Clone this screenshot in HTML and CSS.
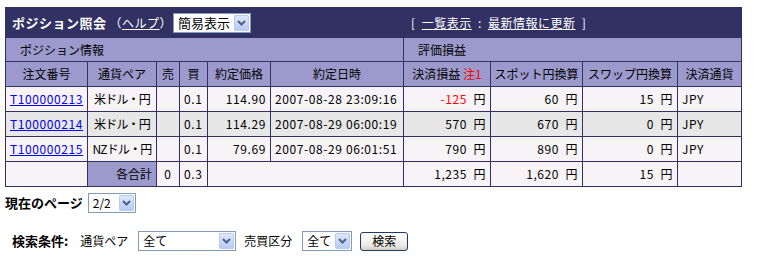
FILE: index.html
```html
<!DOCTYPE html>
<html lang="ja">
<head>
<meta charset="utf-8">
<title>ポジション照会</title>
<link rel="stylesheet" href="styles.css">
</head>
<body>
<table class="pos">
  <colgroup>
    <col class="c1"><col class="c2"><col class="c3"><col class="c4"><col class="c5">
    <col class="c6"><col class="c7"><col class="c8"><col class="c9"><col class="c10">
  </colgroup>
  <tr class="title-row">
    <td colspan="10">
      <div class="title-bar">
        <div class="title-left">
          <span class="title">ポジション照会</span>
          <span class="help">（<a href="#">ヘルプ</a>）</span>
          <span class="sel sel-mode"><span class="sel-text">簡易表示</span><span class="sel-btn"><svg width="9" height="6" viewBox="0 0 9 6"><path d="M1 1 L4.5 4.5 L8 1" fill="none" stroke="#4d6185" stroke-width="2"/></svg></span></span>
        </div>
        <div class="title-right">[ <a href="#">一覧表示</a> : <a href="#">最新情報に更新</a> ]</div>
      </div>
    </td>
  </tr>
  <tr class="section-row">
    <td colspan="6">ポジション情報</td>
    <td colspan="4">評価損益</td>
  </tr>
  <tr class="head-row">
    <th>注文番号</th><th>通貨ペア</th><th>売</th><th>買</th><th>約定価格</th>
    <th>約定日時</th><th>決済損益 <span class="red">注1</span></th><th>スポット円換算</th><th>スワップ円換算</th><th>決済通貨</th>
  </tr>
  <tr class="data">
    <td class="l"><a href="#">T100000213</a></td><td class="pair">米ドル・円</td><td></td><td class="l">0.1</td><td class="r">114.90</td>
    <td class="l">2007-08-28 23:09:16</td><td class="r"><span class="red">-125</span> 円</td><td class="r">60 円</td><td class="r">15 円</td><td class="l">JPY</td>
  </tr>
  <tr class="data alt">
    <td class="l"><a href="#">T100000214</a></td><td class="pair">米ドル・円</td><td></td><td class="l">0.1</td><td class="r">114.29</td>
    <td class="l">2007-08-29 06:00:19</td><td class="r">570 円</td><td class="r">670 円</td><td class="r">0 円</td><td class="l">JPY</td>
  </tr>
  <tr class="data">
    <td class="l"><a href="#">T100000215</a></td><td class="pair">NZドル・円</td><td></td><td class="l">0.1</td><td class="r">79.69</td>
    <td class="l">2007-08-29 06:01:51</td><td class="r">790 円</td><td class="r">890 円</td><td class="r">0 円</td><td class="l">JPY</td>
  </tr>
  <tr class="data total">
    <td></td><td class="r sum">各合計</td><td class="c">0</td><td class="l">0.3</td><td colspan="2"></td>
    <td class="r">1,235 円</td><td class="r">1,620 円</td><td class="r">15 円</td><td></td>
  </tr>
</table>

<div class="page-row">
  <span class="label">現在のページ</span>
  <span class="sel sel-page"><span class="sel-text">2/2</span><span class="sel-btn"><svg width="9" height="6" viewBox="0 0 9 6"><path d="M1 1 L4.5 4.5 L8 1" fill="none" stroke="#4d6185" stroke-width="2"/></svg></span></span>
</div>

<div class="search-row">
  <span class="label">検索条件:</span>
  <span class="txt txt-pair">通貨ペア</span>
  <span class="sel sel-pair"><span class="sel-text">全て</span><span class="sel-btn"><svg width="9" height="6" viewBox="0 0 9 6"><path d="M1 1 L4.5 4.5 L8 1" fill="none" stroke="#4d6185" stroke-width="2"/></svg></span></span>
  <span class="txt txt-side">売買区分</span>
  <span class="sel sel-side"><span class="sel-text">全て</span><span class="sel-btn"><svg width="9" height="6" viewBox="0 0 9 6"><path d="M1 1 L4.5 4.5 L8 1" fill="none" stroke="#4d6185" stroke-width="2"/></svg></span></span>
  <button class="btn" type="button">検索</button>
</div>
</body>
</html>
```

FILE: styles.css
```css
body {
  margin: 0;
  padding: 7px 5px 0 5px;
  background: #fff;
  color: #000;
  font-family: "Noto Sans CJK JP", "Liberation Sans", sans-serif;
  font-size: 12px;
  line-height: 14px;
}

a { color: #0000ee; }

.pos {
  border-collapse: collapse;
  table-layout: fixed;
  width: 737px;
}
.c1 { width: 82px; }
.c2 { width: 69px; }
.c3 { width: 23px; }
.c4 { width: 28px; }
.c5 { width: 63px; }
.c6 { width: 133px; }
.c7 { width: 87px; }
.c8 { width: 92px; }
.c9 { width: 95px; }
.c10 { width: 64px; }

.pos td, .pos th {
  border: 1px solid #313163;
  padding: 0 4px;
  white-space: nowrap;
  overflow: hidden;
}

.title-row td {
  background: #313163;
  height: 30px;
  padding: 0;
  border-bottom: none;
}
.title-bar {
  display: flex;
  align-items: center;
  color: #fff;
}
.title-left {
  width: 398px;
  display: flex;
  align-items: center;
  padding-left: 6px;
  box-sizing: border-box;
}
.title {
  font-weight: bold;
  font-size: 13px;
  letter-spacing: 0.5px;
}
.help {
  margin-left: 3px;
  font-size: 12px;
  letter-spacing: 0.5px;
}
.help a, .title-right a { color: #fff; }
.title-right {
  padding-left: 7px;
  font-size: 12px;
  word-spacing: 3px;
  letter-spacing: 0.5px;
}

.sel {
  display: inline-flex;
  align-items: center;
  box-sizing: border-box;
  height: 20px;
  border: 1px solid #7f9db9;
  background: #fff;
  color: #000;
}
.sel-text {
  flex: 1;
  padding-left: 4px;
  white-space: nowrap;
}
.sel-btn {
  width: 15px;
  height: 16px;
  margin-right: 1px;
  box-sizing: border-box;
  border: 1px solid #b9cbf3;
  border-radius: 1px;
  background: linear-gradient(#dde7fc, #b7cbf6);
  display: flex;
  align-items: center;
  justify-content: center;
}
.sel-mode {
  width: 78px;
  margin-left: 1px;
  font-size: 13px;
}

.section-row td {
  background: #9c9acc;
  height: 23px;
  padding-left: 14px;
  border-top: none;
}

.head-row th {
  background: #9c9acc;
  font-weight: normal;
  height: 24px;
  padding: 0 2px;
  text-align: center;
}

.data td {
  background: #f7f3f7;
  height: 24px;
  letter-spacing: 0.6px;
}
.data.alt td { background: #e7e7e7; }
.data td.sum { background: #9c9acc; letter-spacing: 0; }
.data td.pair {
  text-align: center;
  padding: 0;
  letter-spacing: -0.8px;
}
.l { text-align: left; }
.r { text-align: right; word-spacing: 3px; }
.c { text-align: center; }
.red { color: #ff0000; }

.page-row {
  display: flex;
  align-items: center;
  margin-top: 6px;
  height: 20px;
}
.label {
  font-weight: bold;
  font-size: 13px;
}
.sel-page {
  width: 48px;
  margin-left: 5px;
}

.search-row {
  display: flex;
  align-items: center;
  margin-top: 18px;
  padding-left: 7px;
  height: 20px;
}
.txt-pair { margin-left: 12px; }
.txt-side { margin-left: 8px; }
.sel-pair {
  width: 98px;
  margin-left: 10px;
}
.sel-side {
  width: 50px;
  margin-left: 10px;
}
.btn {
  margin-left: 8px;
  width: 48px;
  height: 19px;
  box-sizing: border-box;
  padding: 0;
  border: 1px solid #1c3a6b;
  border-radius: 3px;
  background: linear-gradient(#ffffff, #ecebe6 70%, #d6d0c5);
  font-family: "Noto Sans CJK JP", sans-serif;
  font-size: 12px;
  line-height: 14px;
  color: #000;
}
```
